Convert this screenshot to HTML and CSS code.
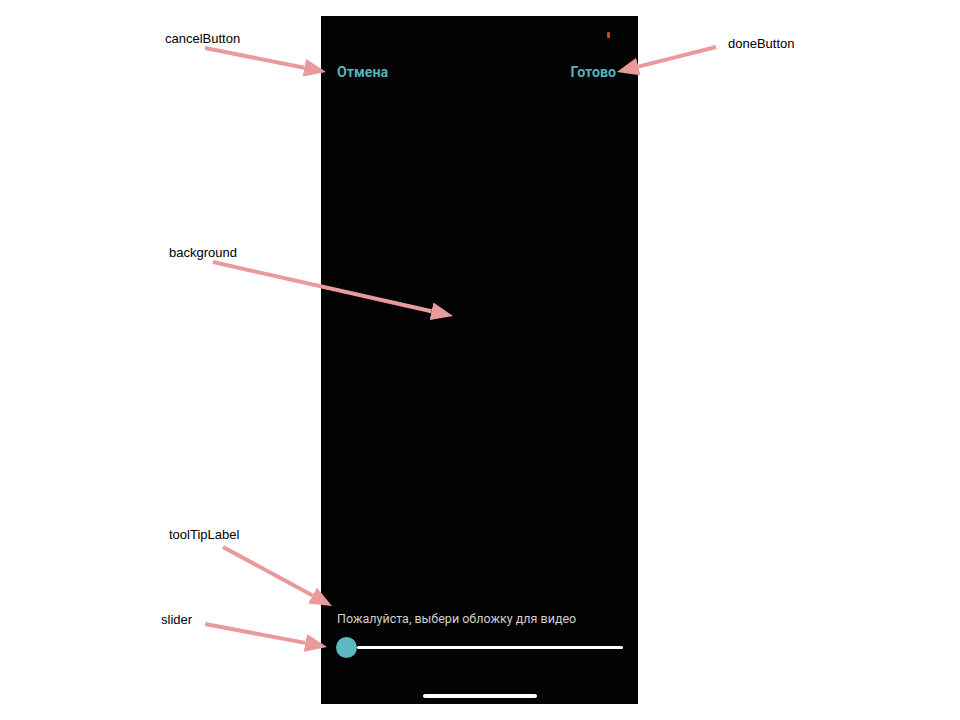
FILE: index.html
```html
<!DOCTYPE html>
<html lang="ru">
<head>
<meta charset="utf-8">
<title>Cover picker</title>
<link rel="stylesheet" href="styles.css">
</head>
<body>
<div class="canvas">
  <div class="phone">
    <span class="rec-dot"></span>
    <div class="nav">
      <span class="nav-btn">Отмена</span>
      <span class="nav-btn">Готово</span>
    </div>
    <div class="spacer"></div>
    <div class="bottom">
      <div class="tooltip">Пожалуйста, выбери обложку для видео</div>
      <div class="slider">
        <span class="thumb"></span>
        <span class="track"></span>
      </div>
      <div class="home-wrap"><span class="home"></span></div>
    </div>
  </div>
  <svg class="annotations" width="960" height="720" viewBox="0 0 960 720">
    <defs>
      <marker id="head" markerUnits="userSpaceOnUse" markerWidth="22" markerHeight="18" refX="0" refY="9" orient="auto">
        <path d="M0,0 L22,9 L0,18 z" fill="#e99b9b"/>
      </marker>
    </defs>
    <g class="arrows">
      <line x1="205" y1="48" x2="304.4" y2="67.7" marker-end="url(#head)"/>
      <line x1="716" y1="47" x2="638.3" y2="66.6" marker-end="url(#head)"/>
      <line x1="213" y1="262" x2="431.5" y2="311.2" marker-end="url(#head)"/>
      <line x1="223" y1="547" x2="312.6" y2="595.5" marker-end="url(#head)"/>
      <line x1="205" y1="624" x2="305.4" y2="642.9" marker-end="url(#head)"/>
    </g>
    <g class="labels">
      <text x="165" y="43">cancelButton</text>
      <text x="728" y="48">doneButton</text>
      <text x="169" y="257">background</text>
      <text x="169" y="539">toolTipLabel</text>
      <text x="161" y="624">slider</text>
    </g>
  </svg>
</div>
</body>
</html>
```
FILE: styles.css
```css
html, body {
  margin: 0;
  padding: 0;
  background: #ffffff;
}
.canvas {
  position: relative;
  width: 960px;
  height: 720px;
  overflow: hidden;
  padding-top: 16px;
  box-sizing: border-box;
}
.phone {
  position: relative;
  margin-left: 321px;
  width: 317px;
  height: 688px;
  background: #030304;
  display: flex;
  flex-direction: column;
  font-family: Roboto, "Noto Sans", sans-serif;
}
.rec-dot {
  position: absolute;
  left: 286px;
  top: 16px;
  width: 3px;
  height: 6px;
  background: #d9423a;
  border-radius: 1px;
}
.nav {
  margin-top: 44px;
  height: 24px;
  display: flex;
  justify-content: space-between;
  align-items: center;
  padding: 0 22px 0 16px;
}
.nav-btn {
  color: #56b1b9;
  font-size: 14.2px;
  font-weight: 700;
}
.spacer {
  flex: 1;
}
.bottom {
  display: flex;
  flex-direction: column;
  padding-bottom: 6px;
}
.tooltip {
  padding-left: 16px;
  color: #cfcfcf;
  font-size: 12.5px;
  line-height: 16px;
}
.slider {
  margin-top: 10px;
  height: 20px;
  padding: 0 15px;
  display: flex;
  align-items: center;
}
.thumb {
  width: 21px;
  height: 21px;
  border-radius: 50%;
  background: #5bb8bf;
  flex: none;
}
.track {
  flex: 1;
  height: 3px;
  background: #ffffff;
  border-radius: 2px;
}
.home-wrap {
  margin-top: 37px;
  display: flex;
  justify-content: center;
}
.home {
  width: 114px;
  height: 4px;
  border-radius: 2px;
  background: #ffffff;
}
.annotations {
  position: absolute;
  left: 0;
  top: 0;
  pointer-events: none;
}
.arrows line {
  stroke: #e99b9b;
  stroke-width: 4;
}
.labels text {
  font-family: "Liberation Sans", Arial, sans-serif;
  font-size: 13px;
  fill: #000000;
}
```
